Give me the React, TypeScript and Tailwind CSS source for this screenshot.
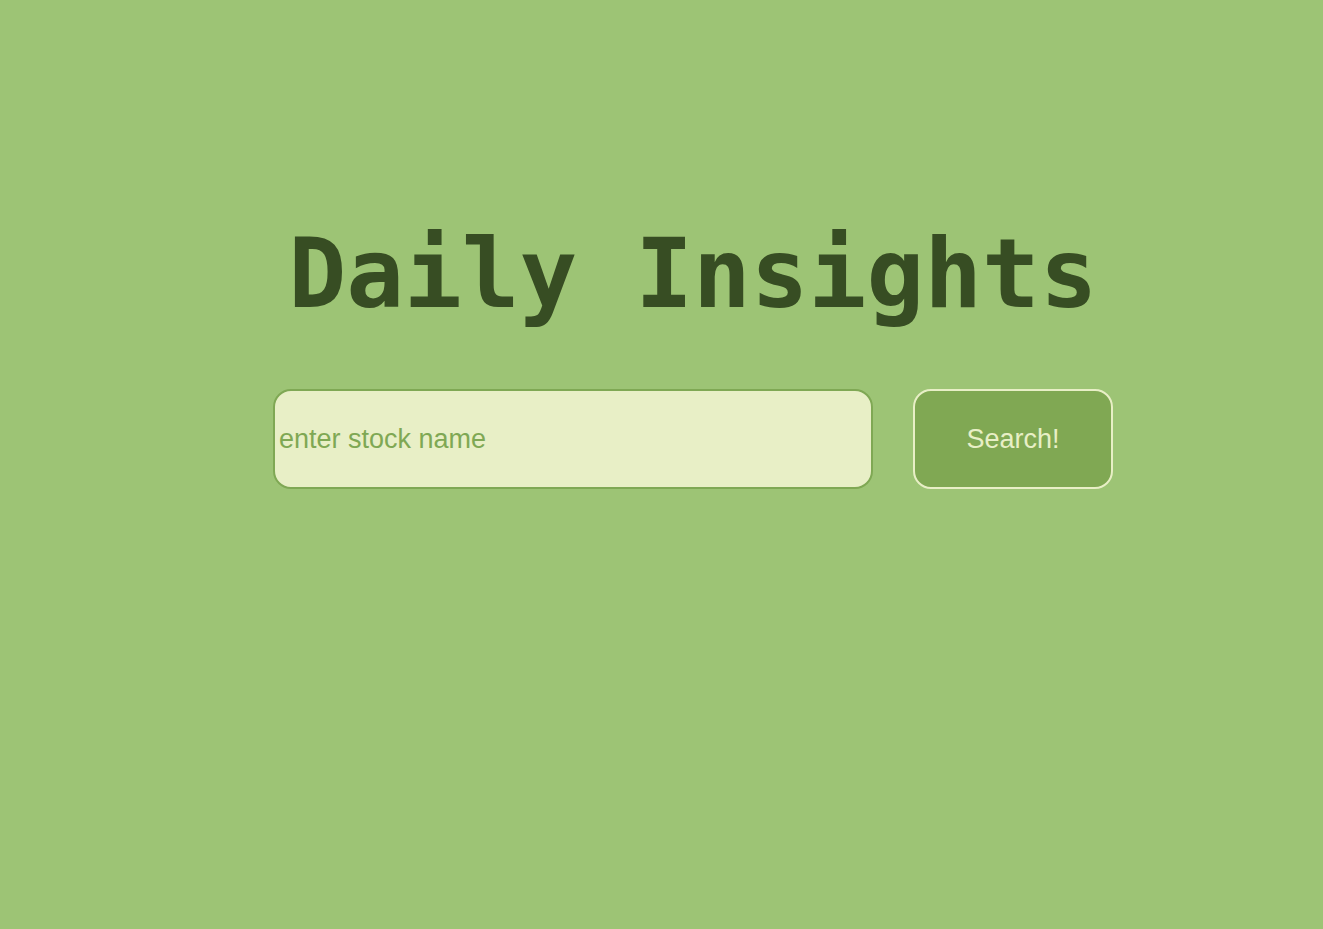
export default function App() {
    return (
        <main className="w-full h-[929px] bg-[#9dc475] flex flex-col items-center pl-[63px] pt-[218px]">
            <h1 className="text-[96px] leading-[112px] font-bold text-[#374d23] font-['DejaVu_Sans_Mono',monospace]">Daily Insights</h1>
            <form className="mt-[59px] flex items-center gap-[40px]" onSubmit={(e) => e.preventDefault()}>
                <input
                    type="text"
                    name="stock"
                    placeholder="enter stock name"
                    className="w-[600px] h-[100px] rounded-[18px] border-2 border-[#7fa854] bg-[#e8efc6] pl-[4px] text-[27px] text-[#374d23] placeholder:text-[#7fa854] font-['Liberation_Sans',Arial,sans-serif] outline-none"
                />
                <button
                    type="submit"
                    className="w-[200px] h-[100px] rounded-[18px] border-2 border-[#e8efc6] bg-[#80a853] text-[27px] text-[#e8efc6] font-['Liberation_Sans',Arial,sans-serif]"
                >
                    Search!
                </button>
            </form>
        </main>
    )
}
